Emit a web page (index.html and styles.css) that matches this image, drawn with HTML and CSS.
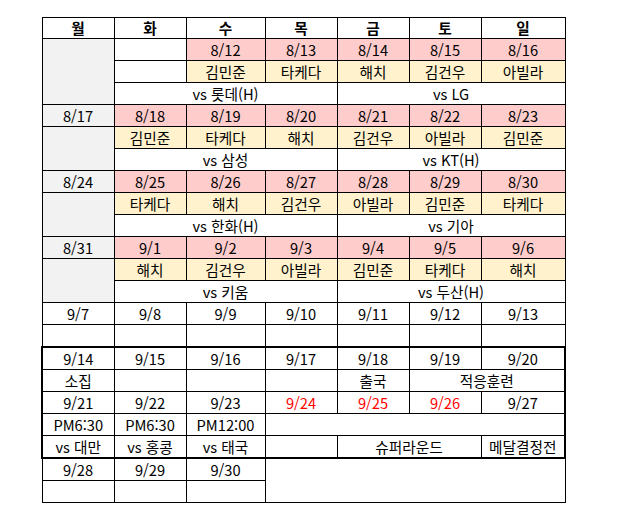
FILE: index.html
```html
<!DOCTYPE html>
<html lang="ko">
<head>
<meta charset="utf-8">
<link rel="stylesheet" href="styles.css">
</head>
<body>
<table class="cal">
<colgroup>
<col class="c72"><col class="c72"><col class="c79"><col class="c72"><col class="c72"><col class="c72"><col class="c84">
</colgroup>
<tr class="head"><th>월</th><th>화</th><th>수</th><th>목</th><th>금</th><th>토</th><th>일</th></tr>

<tr><td class="gray" rowspan="3"></td><td></td><td class="pink">8/12</td><td class="pink">8/13</td><td class="pink">8/14</td><td class="pink">8/15</td><td class="pink">8/16</td></tr>
<tr><td></td><td class="yel">김민준</td><td class="yel">타케다</td><td class="yel">해치</td><td class="yel">김건우</td><td class="yel">아빌라</td></tr>
<tr><td colspan="3">vs 롯데(H)</td><td colspan="3">vs LG</td></tr>

<tr><td class="gray">8/17</td><td class="pink">8/18</td><td class="pink">8/19</td><td class="pink">8/20</td><td class="pink">8/21</td><td class="pink">8/22</td><td class="pink">8/23</td></tr>
<tr><td class="gray" rowspan="2"></td><td class="yel">김민준</td><td class="yel">타케다</td><td class="yel">해치</td><td class="yel">김건우</td><td class="yel">아빌라</td><td class="yel">김민준</td></tr>
<tr><td colspan="3">vs 삼성</td><td colspan="3">vs KT(H)</td></tr>

<tr><td class="gray">8/24</td><td class="pink">8/25</td><td class="pink">8/26</td><td class="pink">8/27</td><td class="pink">8/28</td><td class="pink">8/29</td><td class="pink">8/30</td></tr>
<tr><td class="gray" rowspan="2"></td><td class="yel">타케다</td><td class="yel">해치</td><td class="yel">김건우</td><td class="yel">아빌라</td><td class="yel">김민준</td><td class="yel">타케다</td></tr>
<tr><td colspan="3">vs 한화(H)</td><td colspan="3">vs 기아</td></tr>

<tr><td class="gray">8/31</td><td class="pink">9/1</td><td class="pink">9/2</td><td class="pink">9/3</td><td class="pink">9/4</td><td class="pink">9/5</td><td class="pink">9/6</td></tr>
<tr><td class="gray" rowspan="2"></td><td class="yel">해치</td><td class="yel">김건우</td><td class="yel">아빌라</td><td class="yel">김민준</td><td class="yel">타케다</td><td class="yel">해치</td></tr>
<tr><td colspan="3">vs 키움</td><td colspan="3">vs 두산(H)</td></tr>

<tr><td>9/7</td><td>9/8</td><td>9/9</td><td>9/10</td><td>9/11</td><td>9/12</td><td>9/13</td></tr>
<tr><td></td><td></td><td></td><td></td><td></td><td></td><td></td></tr>

<tr class="tt"><td class="tl">9/14</td><td>9/15</td><td>9/16</td><td>9/17</td><td>9/18</td><td>9/19</td><td class="tr">9/20</td></tr>
<tr><td class="tl">소집</td><td></td><td></td><td></td><td>출국</td><td colspan="2" class="tr">적응훈련</td></tr>
<tr><td class="tl">9/21</td><td>9/22</td><td>9/23</td><td class="red">9/24</td><td class="red">9/25</td><td class="red">9/26</td><td class="tr">9/27</td></tr>
<tr><td class="tl">PM6:30</td><td>PM6:30</td><td>PM12:00</td><td colspan="4" class="tr"></td></tr>
<tr class="tb"><td class="tl">vs 대만</td><td>vs 홍콩</td><td>vs 태국</td><td></td><td colspan="2">슈퍼라운드</td><td class="tr">메달결정전</td></tr>

<tr><td>9/28</td><td>9/29</td><td>9/30</td><td colspan="4" rowspan="2"></td></tr>
<tr><td></td><td></td><td></td></tr>
</table>
</body>
</html>
```

FILE: styles.css
```css
html, body {
  margin: 0;
  padding: 0;
  background: #ffffff;
}
body {
  padding: 17px 0 0 41px;
}
.cal {
  border-collapse: collapse;
  table-layout: fixed;
  width: 523px;
  font-family: "Noto Sans CJK KR", "Malgun Gothic", sans-serif;
  font-size: 14.67px;
  color: #000;
}
.c72 { width: 72px; }
.c79 { width: 79px; }
.c84 { width: 84px; }
.cal th, .cal td {
  border: 1px solid #000;
  height: 21px;
  padding: 0;
  text-align: center;
  vertical-align: middle;
  line-height: 20px;
  white-space: nowrap;
  overflow: hidden;
}
.cal th {
  font-weight: bold;
  height: 20px;
}
.gray { background: #f2f2f2; }
.pink { background: #ffcccc; }
.yel { background: #fff2cc; }
.red { color: #ff0000; }
.tt td { border-top: 2px solid #000; }
.tb td { border-bottom: 2px solid #000; }
.cal td.tl { border-left: 2px solid #000; }
.cal td.tr { border-right: 2px solid #000; }
```
